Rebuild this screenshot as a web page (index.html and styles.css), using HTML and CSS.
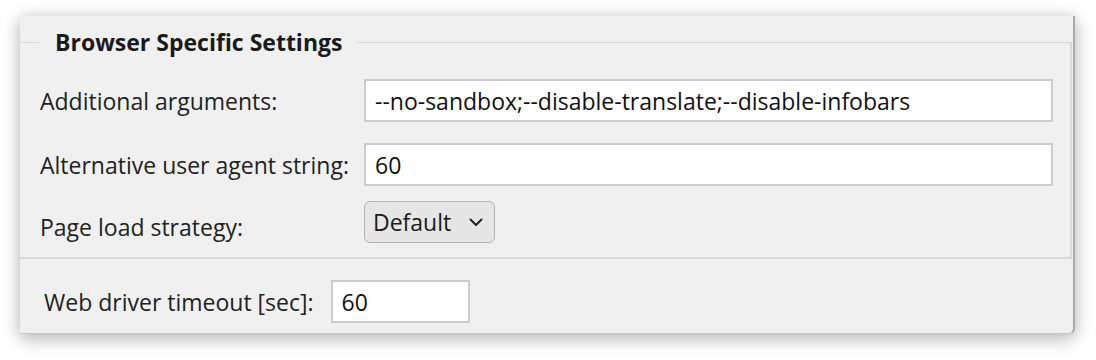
FILE: index.html
```html
<!DOCTYPE html>
<html lang="en">
<head>
  <meta charset="UTF-8">
  <title>Browser Specific Settings</title>
  <link rel="stylesheet" href="styles.css">
</head>
<body>
  <div class="panel">
    <fieldset class="group">
      <legend>Browser Specific Settings</legend>
      <div class="rows">
        <label class="label">Additional arguments:</label>
        <input class="field" type="text" value="--no-sandbox;--disable-translate;--disable-infobars">

        <label class="label">Alternative user agent string:</label>
        <input class="field" type="text" value="60">

        <label class="label low">Page load strategy:</label>
        <div class="combo">
          <span>Default</span>
          <svg width="14" height="9" viewBox="0 0 14 9">
            <path d="M1.5 1.5 L7 7 L12.5 1.5" fill="none" stroke="#222" stroke-width="2" stroke-linecap="round" stroke-linejoin="round"/>
          </svg>
        </div>
      </div>
    </fieldset>
    <div class="timeout">
      <label class="label">Web driver timeout [sec]:</label>
      <input class="field small" type="text" value="60">
    </div>
  </div>
</body>
</html>
```

FILE: styles.css
```css
* {
  margin: 0;
  padding: 0;
  box-sizing: border-box;
}
html, body {
  width: 100%;
  height: 100%;
}
body {
  background: #fff;
  font-family: "Open Sans", "Noto Sans", sans-serif;
  font-size: 23px;
  color: #222;
  overflow: hidden;
}
.panel {
  margin: 16px 0 0 20px;
  width: 1055px;
  height: 318px;
  background: #f0f0f0;
  border-right: 2px solid #a9a9a9;
  border-bottom: 1px solid #c6c6c6;
  border-bottom-right-radius: 6px;
  box-shadow: 0 6px 18px rgba(0, 0, 0, .22), 0 0 16px rgba(0, 0, 0, .12);
  padding-top: 11px;
}
.group {
  margin-right: 1px;
  border: 2px solid #d9d9d9;
  border-left: 0;
  border-top-width: 1px;
  padding: 22px 17px 14px 20px;
}
.group legend {
  margin-left: -1px;
  padding: 0 15px 0 16px;
  font-weight: bold;
  font-size: 23px;
  line-height: 30px;
  color: #1a1a1a;
}
.rows {
  display: grid;
  grid-template-columns: 324px 1fr;
  row-gap: 21px;
  align-items: center;
}
.label {
  white-space: nowrap;
}
.label.low {
  padding-top: 4px;
}
.field {
  height: 43px;
  border: 2px solid #cbcbd2;
  background: #fff;
  padding: 0 9px;
  font: inherit;
  color: #111;
  outline: none;
}
.combo {
  width: 131px;
  height: 42px;
  margin-top: -6px;
  display: flex;
  align-items: center;
  justify-content: space-between;
  padding: 0 11px 0 8px;
  background: #e6e6e6;
  border: 1.5px solid #b3b3b3;
  border-radius: 6px;
  color: #1a1a1a;
}
.combo svg {
  margin-top: 1px;
}
.timeout {
  display: flex;
  align-items: center;
  gap: 17px;
  padding: 21px 0 0 24px;
}
.field.small {
  width: 139px;
}
```
